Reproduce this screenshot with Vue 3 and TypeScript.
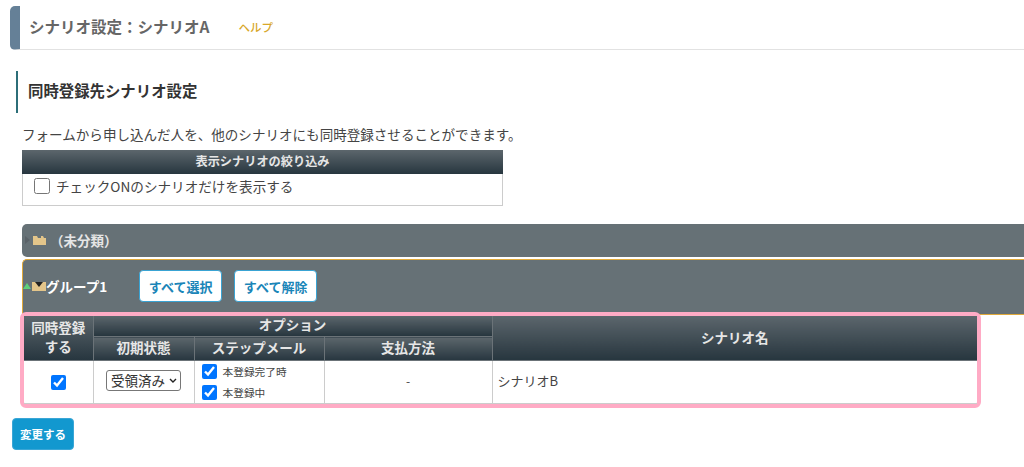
<script setup lang="ts">
import { ref } from 'vue'
const onlyChecked = ref(false)
const enrolled = ref(true)
const onComplete = ref(true)
const onRegister = ref(true)
const status = ref('受領済み')
</script>

<template>
  <div class="page">
    <header class="title-bar">
      <h1>シナリオ設定：シナリオA</h1>
      <a class="help">ヘルプ</a>
    </header>

    <h2 class="section">同時登録先シナリオ設定</h2>
    <p class="desc">フォームから申し込んだ人を、他のシナリオにも同時登録させることができます。</p>

    <section class="filter">
      <div class="filter-head dark">表示シナリオの絞り込み</div>
      <label class="filter-body">
        <input v-model="onlyChecked" type="checkbox" class="cb-big" />
        <span>チェックONのシナリオだけを表示する</span>
      </label>
    </section>

    <div class="group closed">
      <svg class="arrow" width="6" height="8" viewBox="0 0 6 8"><path d="M0 0l5 4-5 4z" fill="#5a6268" /></svg>
      <svg class="folder" width="13" height="10" viewBox="0 0 13 10"><path d="M0 1h4l1 2h3V1h2l1 2h2v7H0z" fill="#e3c58a" /></svg>
      <span class="group-name muted">（未分類）</span>
    </div>

    <div class="group open">
      <svg class="arrow-up" width="8" height="6" viewBox="0 0 8 6"><path d="M4 0l4 6H0z" fill="#5fd07a" /></svg>
      <svg class="folder-open" width="14" height="10" viewBox="0 0 14 10">
        <rect y="1" width="14" height="9" fill="#e3c58a" />
        <path d="M3 1h8L7 6z" fill="#222" />
      </svg>
      <span class="group-name">グループ1</span>
      <button class="pick first">すべて選択</button>
      <button class="pick">すべて解除</button>
    </div>

    <div class="highlight">
      <table>
        <colgroup>
          <col class="c1" /><col class="c2" /><col class="c3" /><col class="c4" /><col />
        </colgroup>
        <thead>
          <tr class="r1">
            <th rowspan="2">同時登録<br />する</th>
            <th colspan="3" class="opt">オプション</th>
            <th rowspan="2">シナリオ名</th>
          </tr>
          <tr class="r2">
            <th>初期状態</th>
            <th>ステップメール</th>
            <th>支払方法</th>
          </tr>
        </thead>
        <tbody>
          <tr>
            <td class="center"><input v-model="enrolled" type="checkbox" class="cb" /></td>
            <td class="center">
              <select v-model="status"><option>受領済み</option></select>
            </td>
            <td class="steps">
              <label><input v-model="onComplete" type="checkbox" class="cb" />本登録完了時</label>
              <label><input v-model="onRegister" type="checkbox" class="cb" />本登録中</label>
            </td>
            <td class="center">-</td>
            <td class="name">シナリオB</td>
          </tr>
        </tbody>
      </table>
    </div>

    <button class="submit">変更する</button>
  </div>
</template>

<style>
html, body { margin: 0; background: #fff; overflow: hidden; }
</style>

<style scoped>
.page {
  width: 1024px;
  height: 467px;
  overflow: hidden;
  box-sizing: border-box;
  padding-top: 6px;
  font-family: "Noto Sans CJK JP", "Noto Sans", sans-serif;
  color: #333;
}
.title-bar {
  margin-left: 10px;
  height: 44px;
  box-sizing: border-box;
  display: flex;
  align-items: center;
  padding-left: 9px;
  padding-bottom: 3px;
  border-left: 10px solid #658097;
  border-bottom: 1px solid #e2e2e2;
  border-radius: 5px 0 0 5px;
}
.title-bar h1 {
  margin: 0;
  font-size: 15.5px;
  line-height: 20px;
  font-weight: 700;
  color: #666;
}
.help {
  margin-left: 29px;
  margin-top: 2px;
  font-size: 11.5px;
  font-weight: 500;
  color: #d8a72a;
}
.section {
  margin: 21px 0 0 16px;
  height: 42px;
  box-sizing: border-box;
  padding-left: 10px;
  border-left: 2px solid #2c6e78;
  font-size: 15.4px;
  line-height: 38px;
  font-weight: 700;
  color: #333;
}
.desc {
  margin: 12px 0 0 22px;
  font-size: 13.55px;
  line-height: 18px;
  color: #444;
}
.dark {
  background: linear-gradient(#5c666c, #27363f);
  color: #e6e6e6;
  font-weight: 700;
}
.filter {
  margin: 7px 0 0 22px;
  width: 481px;
  height: 56px;
  box-sizing: border-box;
  border: 1px solid #ccc;
  border-top: 0;
}
.filter-head {
  margin: 0 -1px;
  height: 24px;
  line-height: 23px;
  font-size: 12.2px;
  text-align: center;
}
.filter-body {
  display: flex;
  align-items: center;
  height: 24px;
  padding-left: 11px;
  font-size: 13.6px;
  color: #444;
}
.cb-big {
  width: 16px;
  height: 16px;
  margin: 0 6px 0 0;
  accent-color: #0075ff;
}
.group {
  margin-left: 22px;
  background: #667176;
  display: flex;
  align-items: center;
  box-sizing: border-box;
}
.group.closed {
  margin-top: 18px;
  height: 33px;
  border-radius: 5px 0 0 5px;
  padding-left: 3px;
  padding-bottom: 2px;
}
.group.open {
  margin-top: 2px;
  height: 56px;
  border: 1px solid #e0a93a;
  border-right: 0;
  border-radius: 5px 0 0 0;
  padding-bottom: 2px;
}
.arrow { margin-right: 2px; }
.folder { margin-right: 4px; }
.arrow-up { margin-right: 1px; }
.folder-open { margin-right: 0; }
.group-name {
  font-size: 13.5px;
  font-weight: 700;
  color: #fff;
}
.group-name.muted { color: #e6e6e6; }
.pick {
  margin-left: 12px;
  width: 83px;
  height: 32px;
  padding: 0;
  background: #fff;
  border: 1px solid #39a3d3;
  border-radius: 4px;
  font: 700 13px "Noto Sans CJK JP", sans-serif;
  color: #1a85b8;
}
.pick.first { margin-left: 32px; }
.highlight {
  position: relative;
  margin: -3px 0 0 20px;
  width: 961px;
  box-sizing: border-box;
  border: 4px solid #ffabc5;
  border-radius: 6px;
  background: #fff;
}
table {
  width: 953px;
  table-layout: fixed;
  border-collapse: collapse;
  font-size: 11px;
}
.c1 { width: 69px; }
.c2 { width: 101px; }
.c3 { width: 130px; }
.c4 { width: 168px; }
th {
  padding: 0 0 2px;
  background: linear-gradient(#5c666c, #27363f);
  border: 1px solid #6b7378;
  border-top: 0;
  color: #e6e6e6;
  font-size: 13.5px;
  font-weight: 700;
  line-height: 19px;
}
th.opt { line-height: 17px; padding-bottom: 3px; }
.r1 th { height: 17px; }
.r2 th { height: 21px; }
th:last-child { border-right: 0; }
.r1 th:first-child { border-left: 0; }
td {
  height: 42px;
  padding: 0;
  border: 1px solid #ccc;
  border-top: 0;
  color: #444;
  font-size: 12px;
}
td:first-child { border-left: 0; }
td:last-child { border-right: 0; }
.center { text-align: center; }
td.center, td.name { padding-bottom: 3px; height: 39px; }
.cb {
  width: 15px;
  height: 15px;
  margin: 0;
  vertical-align: middle;
  accent-color: #0075ff;
}
select {
  appearance: none;
  box-sizing: border-box;
  width: 75px;
  height: 21px;
  padding: 0 0 0 4px;
  font: 13.5px/19px "Noto Sans CJK JP", sans-serif;
  color: #333;
  background: #fff url("data:image/svg+xml,%3Csvg xmlns='http://www.w3.org/2000/svg' width='8' height='5'%3E%3Cpath d='M1 1l3 3 3-3' fill='none' stroke='%23222' stroke-width='1.4'/%3E%3C/svg%3E") no-repeat right 3px center;
  border: 1px solid #777;
  border-radius: 3px;
  vertical-align: middle;
}
.steps label {
  display: flex;
  align-items: center;
  height: 21px;
  padding-left: 7px;
  font-size: 10.7px;
}
.steps .cb { margin-right: 6px; }
.name {
  padding-left: 5px;
  font-size: 13px;
}
.submit {
  display: block;
  margin: 10px 0 0 12px;
  width: 62px;
  height: 32px;
  padding: 0;
  background: #1298cf;
  border: 1px solid #3aa6d6;
  border-radius: 4px;
  color: #fff;
  font: 700 11.5px "Noto Sans CJK JP", sans-serif;
}
</style>
